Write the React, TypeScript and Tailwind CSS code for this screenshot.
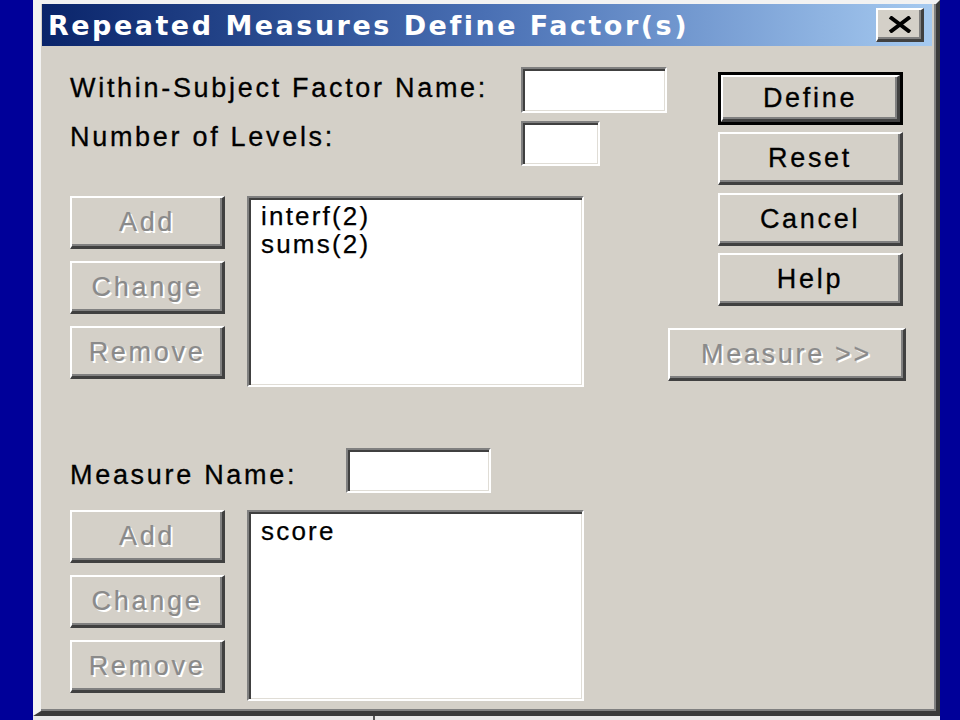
import React from "react";

const raised =
  "bg-[#d4d0c8] border-t-[2px] border-l-[2px] border-t-white border-l-white border-r-[3px] border-b-[3px] border-r-[#404040] border-b-[#404040] shadow-[inset_-2px_-2px_0_#808080]";

const sunken =
  "bg-white border-t-[2px] border-l-[2px] border-t-[#808080] border-l-[#808080] border-b-[2px] border-r-[2px] border-b-white border-r-white shadow-[inset_2px_2px_0_#404040,inset_-1px_-1px_0_#e0ddd6]";

function Btn({
  label,
  disabled = false,
  className = "",
}: {
  label: string;
  disabled?: boolean;
  className?: string;
}) {
  return (
    <div className={`flex items-center justify-center ${raised} ${className}`}>
      <span
        className={
          disabled
            ? "text-[#8a8a8a] [text-shadow:2px_2px_0_#ffffff] [-webkit-text-stroke:0.2px_#8a8a8a] leading-[27px]"
            : "text-black [-webkit-text-stroke:0.3px_#000000] leading-[27px]"
        }
      >
        {label}
      </span>
    </div>
  );
}

function ButtonStack() {
  return (
    <div className="flex flex-col gap-[12px] w-[155px] shrink-0">
      <Btn label="Add" disabled className="h-[53px]" />
      <Btn label="Change" disabled className="h-[53px]" />
      <Btn label="Remove" disabled className="h-[53px]" />
    </div>
  );
}

function ListBox({ items, pt }: { items: string[]; pt: string }) {
  return (
    <div
      className={`w-[337px] h-[191px] ${sunken} pl-[12px] ${pt} text-[26px] tracking-[2.2px] leading-[28px] [-webkit-text-stroke:0.25px_#000000]`}
    >
      {items.map((t) => (
        <div key={t}>{t}</div>
      ))}
    </div>
  );
}

export default function App() {
  return (
    <div className="w-[960px] h-[720px] bg-[#000099] overflow-hidden font-['Liberation_Sans',Arial,sans-serif]">
      <div className="ml-[33px] w-[907px] flex flex-col">
        <div className="h-[716px] bg-[#d4d0c8] border-l-[8px] border-t-[4px] border-l-[#f2f2f2] border-t-[#f2f2f2] border-r-[4px] border-b-[5px] border-r-[#3a3a3a] border-b-[#3a3a3a] shadow-[inset_-2px_-2px_0_#808080] flex flex-col">
          {/* Title bar */}
          <div className="h-[42px] ml-[1px] mr-[4px] flex items-center justify-between bg-gradient-to-r from-[#0a246a] via-[#4a70b4] to-[#a6caf0]">
            <span className="pl-[6px] text-white font-['DejaVu_Sans',sans-serif] font-bold text-[27px] tracking-[2.5px] leading-none">
              Repeated Measures Define Factor(s)
            </span>
            <div className={`w-[48px] h-[34px] mr-[8px] flex items-center justify-center ${raised}`}>
              <svg width="24" height="17" viewBox="0 0 24 17">
                <path d="M2 1 L22 16 M22 1 L2 16" stroke="#000" strokeWidth="4" strokeLinecap="butt" />
              </svg>
            </div>
          </div>

          {/* Body */}
          <div className="flex text-[27px] tracking-[2.7px] text-black [-webkit-text-stroke:0.3px_#000000]">
            {/* Left column */}
            <div className="w-[627px] shrink-0 pl-[29px] pt-[21px] flex flex-col">
              <div className="flex h-[46px]">
                <div className="w-[451px] mt-[8px] leading-[27px]">Within-Subject Factor Name:</div>
                <div className={`w-[146px] h-[46px] ${sunken}`} />
              </div>
              <div className="flex h-[45px] mt-[8px]">
                <div className="w-[451px] mt-[3px] leading-[27px]">Number of Levels:</div>
                <div className={`w-[79px] h-[45px] ${sunken}`} />
              </div>
              <div className="flex gap-[22px] mt-[30px]">
                <ButtonStack />
                <ListBox items={["interf(2)", "sums(2)"]} pt="pt-[4px]" />
              </div>
              <div className="flex h-[45px] mt-[61px]">
                <div className="w-[276px] mt-[14px] leading-[27px]">Measure Name:</div>
                <div className={`w-[145px] h-[45px] ${sunken}`} />
              </div>
              <div className="flex gap-[22px] mt-[17px]">
                <ButtonStack />
                <ListBox items={["score"]} pt="pt-[5px]" />
              </div>
            </div>

            {/* Right column */}
            <div className="w-[238px] shrink-0 pt-[26px] flex flex-col">
              <div className="ml-[50px] w-[185px] h-[53px] border-[3px] border-black flex">
                <Btn label="Define" className="flex-1" />
              </div>
              <Btn label="Reset" className="ml-[50px] w-[185px] h-[53px] mt-[7px]" />
              <Btn label="Cancel" className="ml-[50px] w-[185px] h-[53px] mt-[8px]" />
              <Btn label="Help" className="ml-[50px] w-[185px] h-[53px] mt-[7px]" />
              <Btn label="Measure >>" disabled className="w-[238px] h-[53px] mt-[22px]" />
            </div>
          </div>
        </div>
        <div className="h-[4px] bg-[#e8e8e8] flex">
          <div className="ml-[340px] w-[2px] h-full bg-[#555555]" />
        </div>
      </div>
    </div>
  );
}
